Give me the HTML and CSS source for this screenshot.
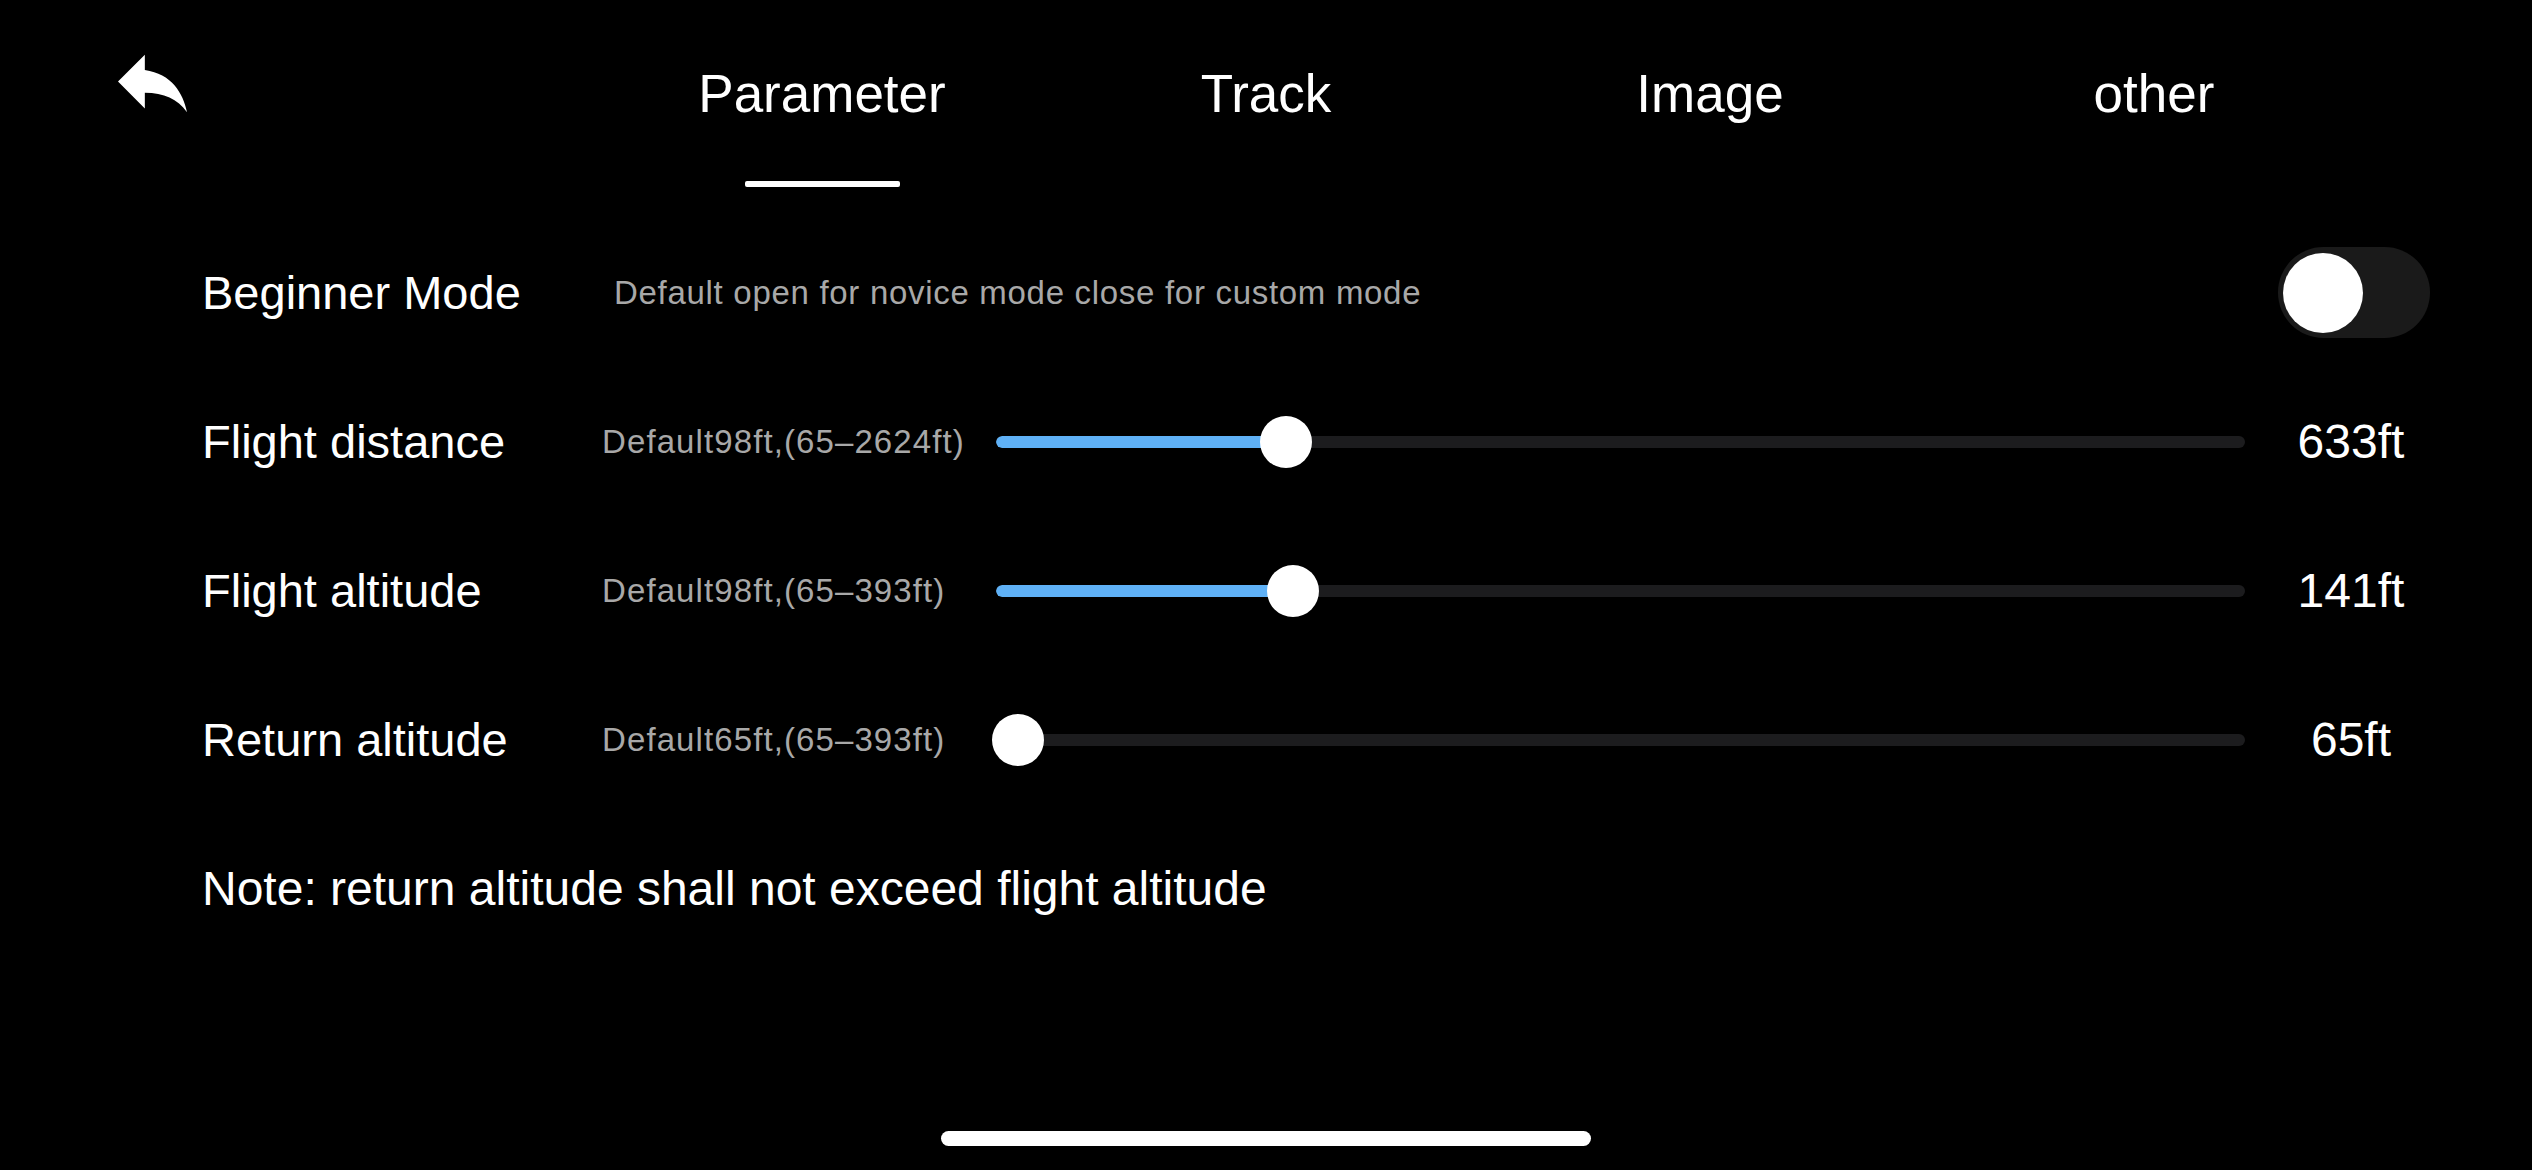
FILE: index.html
```html
<!DOCTYPE html>
<html lang="en">
<head>
<meta charset="utf-8">
<title>Settings</title>
<link rel="stylesheet" href="styles.css">
</head>
<body>
<div class="screen">
  <header class="header">
    <div class="back">
      <svg class="back-icon" viewBox="3 5 18 15" width="69" height="59" aria-hidden="true">
        <path d="M10 9V5l-7 7 7 7v-4.1c5 0 8.5 1.6 11 5.1-1-5-4-10-11-11z" fill="#fff"/>
      </svg>
    </div>
    <nav class="tabs">
      <div class="tab active"><span class="tab-label">Parameter</span><span class="tab-bar"></span></div>
      <div class="tab"><span class="tab-label">Track</span><span class="tab-bar"></span></div>
      <div class="tab"><span class="tab-label">Image</span><span class="tab-bar"></span></div>
      <div class="tab"><span class="tab-label">other</span><span class="tab-bar"></span></div>
    </nav>
  </header>

  <main class="settings">
    <div class="row">
      <div class="label">Beginner Mode</div>
      <div class="desc desc-wide">Default open for novice mode close for custom mode</div>
      <div class="toggle"><span class="toggle-knob"></span></div>
    </div>

    <div class="row">
      <div class="label">Flight distance</div>
      <div class="desc">Default98ft,(65–2624ft)</div>
      <div class="slider" style="--p:0.222">
        <div class="slider-track"><div class="slider-fill"></div></div>
        <div class="slider-knob"></div>
      </div>
      <div class="value">633ft</div>
    </div>

    <div class="row">
      <div class="label">Flight altitude</div>
      <div class="desc">Default98ft,(65–393ft)</div>
      <div class="slider" style="--p:0.228">
        <div class="slider-track"><div class="slider-fill"></div></div>
        <div class="slider-knob"></div>
      </div>
      <div class="value">141ft</div>
    </div>

    <div class="row">
      <div class="label">Return altitude</div>
      <div class="desc">Default65ft,(65–393ft)</div>
      <div class="slider" style="--p:0">
        <div class="slider-track"><div class="slider-fill"></div></div>
        <div class="slider-knob"></div>
      </div>
      <div class="value">65ft</div>
    </div>

    <div class="row note-row">
      <div class="note">Note: return altitude shall not exceed flight altitude</div>
    </div>
  </main>

  <div class="home-indicator"></div>
</div>
</body>
</html>
```

FILE: styles.css
```css
* {
  box-sizing: border-box;
}

html, body {
  margin: 0;
  padding: 0;
  background: #000;
}

body {
  font-family: "Liberation Sans", Arial, sans-serif;
  color: #fff;
}

.screen {
  width: 2532px;
  height: 1170px;
  display: flex;
  flex-direction: column;
  overflow: hidden;
}

/* Header */
.header {
  display: flex;
  align-items: flex-start;
  height: 200px;
  padding-left: 118px;
}

.back {
  flex: 0 0 482px;
  padding-top: 54px;
}

.back-icon {
  display: block;
}

.tabs {
  display: flex;
}

.tab {
  width: 444px;
  display: flex;
  flex-direction: column;
  align-items: center;
  padding-top: 62px;
}

.tab-label {
  font-size: 53px;
  line-height: 64px;
  height: 64px;
  white-space: nowrap;
}

.tab-bar {
  display: block;
  width: 155px;
  height: 6px;
  margin-top: 55px;
  border-radius: 2px;
  background: transparent;
}

.tab.active .tab-bar {
  background: #fff;
}

/* Settings rows */
.settings {
  margin-top: 18px;
  padding-left: 202px;
}

.row {
  display: grid;
  grid-template-columns: 400px 394px 1249px 185px;
  align-items: center;
  height: 149px;
}

.label {
  font-size: 47px;
  white-space: nowrap;
}

.desc {
  font-size: 33px;
  letter-spacing: 1.1px;
  color: #a8a8a8;
  white-space: nowrap;
}

.desc-wide {
  grid-column: 2 / 4;
  padding-left: 12px;
  letter-spacing: 0.7px;
}

/* Toggle */
.toggle {
  grid-column: 4;
  justify-self: end;
  width: 152px;
  height: 91px;
  border-radius: 46px;
  background: #1a1a1a;
  display: flex;
  align-items: center;
  padding-left: 5px;
}

.toggle-knob {
  display: block;
  width: 80px;
  height: 80px;
  border-radius: 50%;
  background: #fff;
}

/* Slider */
.slider {
  position: relative;
  height: 52px;
  display: flex;
  align-items: center;
}

.slider-track {
  width: 100%;
  height: 12px;
  border-radius: 6px;
  background: #1c1c1e;
  overflow: hidden;
}

.slider-fill {
  height: 100%;
  width: calc(22px + var(--p) * (100% - 44px));
  background: #5fb1f6;
  border-radius: 6px;
}

.slider-knob {
  position: absolute;
  top: 0;
  left: calc(22px + var(--p) * (100% - 44px) - 26px);
  width: 52px;
  height: 52px;
  border-radius: 50%;
  background: #fff;
}

.value {
  padding-left: 27px;
  text-align: center;
  font-size: 48px;
  white-space: nowrap;
}

/* Note */
.note-row {
  display: flex;
}

.note {
  font-size: 48px;
  white-space: nowrap;
}

/* Home indicator */
.home-indicator {
  margin-top: auto;
  margin-bottom: 24px;
  align-self: center;
  width: 650px;
  height: 15px;
  border-radius: 8px;
  background: #fff;
}
```
